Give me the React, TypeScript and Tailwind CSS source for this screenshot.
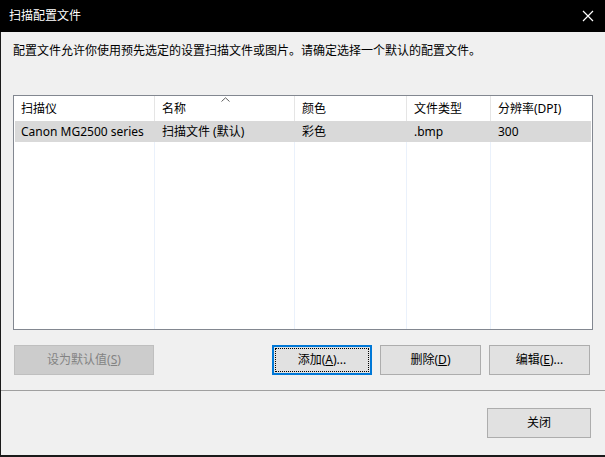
const font = { fontFamily: '"Noto Sans", "Noto Sans CJK SC", sans-serif' };

const columns = [
  { label: "扫描仪", width: "w-[141px]" },
  { label: "名称", width: "w-[140px]", sorted: true },
  { label: "颜色", width: "w-[112px]" },
  { label: "文件类型", width: "w-[84px]" },
  { label: "分辨率(DPI)", width: "flex-1" },
];

const row = ["Canon MG2500 series", "扫描文件 (默认)", "彩色", ".bmp", "300"];

function Btn({
  children,
  className = "",
  focused = false,
  disabled = false,
}: {
  children: React.ReactNode;
  className?: string;
  focused?: boolean;
  disabled?: boolean;
}) {
  if (disabled) {
    return (
      <div
        className={`flex h-[30px] items-center justify-center border border-[#bfbfbf] bg-[#cccccc] text-[12px] text-[#838383] ${className}`}
      >
        {children}
      </div>
    );
  }
  if (focused) {
    return (
      <div className={`h-[30px] border-2 border-[#0078d7] bg-[#e1e1e1] p-px ${className}`}>
        <div className="flex h-full items-center justify-center border border-dotted border-black text-[12px] text-black">
          {children}
        </div>
      </div>
    );
  }
  return (
    <div
      className={`flex h-[30px] items-center justify-center border border-[#adadad] bg-[#e1e1e1] text-[12px] text-black ${className}`}
    >
      {children}
    </div>
  );
}

export default function App() {
  return (
    <div className="flex h-[457px] w-[605px] flex-col overflow-hidden bg-[#f0f0f0]" style={font}>
      <div className="flex h-[32px] items-center justify-between bg-black pl-[9px] pr-[10px]">
        <span className="text-[12px] text-white">扫描配置文件</span>
        <svg width="12" height="12" viewBox="0 0 12 12" className="mr-[1px]">
          <path d="M1 1 L11 11 M11 1 L1 11" stroke="white" strokeWidth="1.2" />
        </svg>
      </div>

      <div className="flex flex-1 flex-col border-b-2 border-l border-[#1a1a1a]">
        <p className="pl-[12px] pt-[11px] text-[12px] leading-[16px] text-black">
          配置文件允许你使用预先选定的设置扫描文件或图片。请确定选择一个默认的配置文件。
        </p>

        <div className="ml-[12px] mr-[12px] mt-[36px] flex h-[235px] flex-col border border-[#828790] bg-white">
          <div className="flex h-[25px] text-[12px] text-black">
            {columns.map((c, i) => (
              <div
                key={c.label}
                className={`relative flex items-center pl-[7px] ${c.width} ${
                  i < columns.length - 1 ? "border-r border-[#e5e5e5]" : ""
                }`}
              >
                {c.sorted && (
                  <svg
                    width="9"
                    height="5"
                    viewBox="0 0 9 5"
                    className="absolute left-[66px] top-[1px]"
                  >
                    <path d="M0.5 4.5 L4.5 0.8 L8.5 4.5" fill="none" stroke="#606060" strokeWidth="1" />
                  </svg>
                )}
                {c.label}
              </div>
            ))}
          </div>
          <div className="mx-px flex h-[21px] bg-[#d9d9d9] text-[12px] text-black">
            {row.map((v, i) => (
              <div
                key={i}
                className={`flex items-center ${i === 0 ? "pl-[6px]" : "pl-[7px]"} ${
                  i === 0
                    ? "w-[140px]"
                    : i === row.length - 1
                      ? "flex-1"
                      : columns[i].width
                }`}
              >
                {v}
              </div>
            ))}
          </div>
          <div className="flex flex-1">
            {columns.map((c, i) => (
              <div
                key={c.label}
                className={`${c.width} ${i < columns.length - 1 ? "border-r border-[#eaf1fb]" : ""}`}
              />
            ))}
          </div>
        </div>

        <div className="mt-[15px] flex pl-[13px] pr-[14px]">
          <Btn disabled className="w-[140px]">
            设为默认值(<span className="underline">S</span>)
          </Btn>
          <Btn focused className="ml-[118px] w-[100px]">
            添加(<span className="underline">A</span>)...
          </Btn>
          <Btn className="ml-[8px] w-[101px]">
            删除(<span className="underline">D</span>)
          </Btn>
          <Btn className="ml-[8px] w-[101px]">
            编辑(<span className="underline">E</span>)...
          </Btn>
        </div>

        <div className="mt-[15px] h-px bg-[#a0a0a0]" />

        <div className="flex justify-end pr-[14px] pt-[17px]">
          <Btn className="w-[104px]">关闭</Btn>
        </div>
      </div>
    </div>
  );
}
